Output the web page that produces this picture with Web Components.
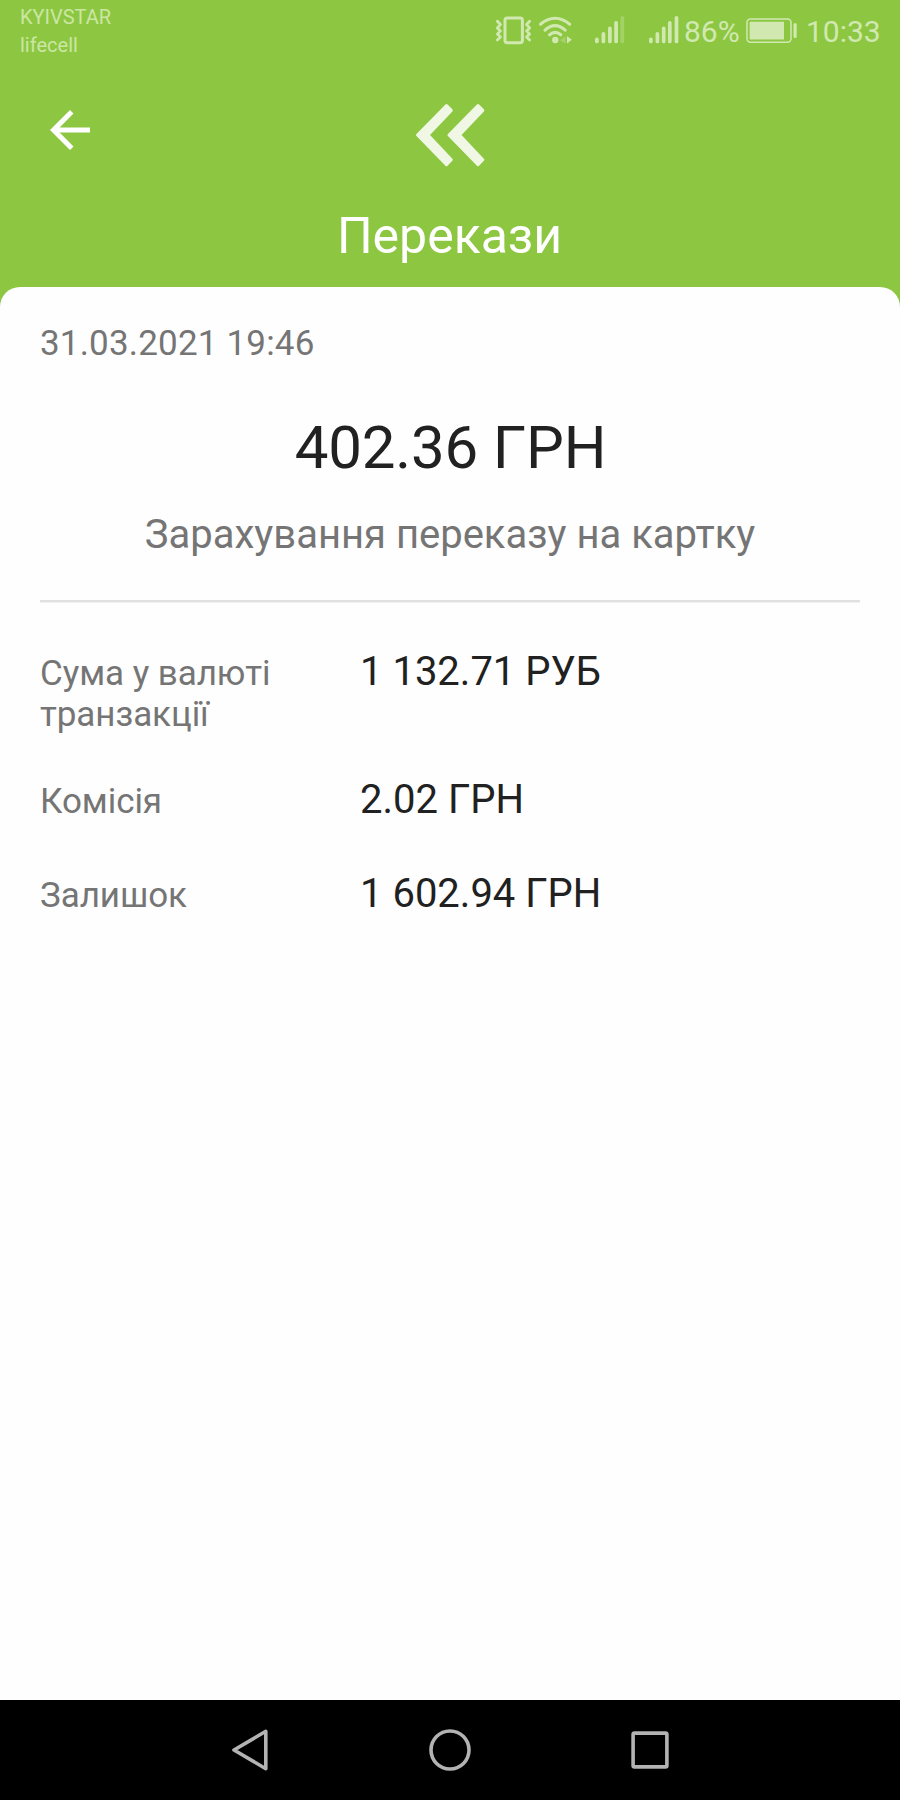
<!DOCTYPE html>
<html lang="uk">
<head>
<meta charset="utf-8">
<title>Перекази</title>
<style>
  body { margin: 0; background: #fefefe; font-family: Roboto, "Noto Sans", sans-serif; }
</style>
</head>
<body>
<transfer-screen></transfer-screen>
<script>
const define = (name, html) => {
  const template = document.createElement('template');
  template.innerHTML = html;
  customElements.define(name, class extends HTMLElement {
    constructor() {
      super();
      this.attachShadow({ mode: 'open' }).append(template.content.cloneNode(true));
    }
  });
};

define('status-icons', `
  <style>
    :host { display: flex; align-items: flex-start; height: 60px; color: #d1e9b1; }
    svg { display: block; height: 60px; flex: none; }
  </style>
  <svg width="44" viewBox="494 0 44 60" fill="none" stroke="currentColor" stroke-linejoin="round" stroke-linecap="round">
    <rect x="505" y="18" width="17.4" height="24.8" rx="2.2" stroke-width="3"/>
    <path stroke-width="2.8" d="M497.4 21.3l3 3.2-3 3.4 3 3-3 3.2 3 3-3 2.8M529.6 21.3l-3 3.2 3 3.4-3 3 3 3.2-3 3 3 2.8"/>
  </svg>
  <svg width="44" viewBox="538 0 44 60">
    <g fill="none" stroke="currentColor" stroke-width="3.1" stroke-linecap="round">
      <path d="M540.5 24.2Q555 12.3 569.7 24.2M545 30.2Q555 21 565.2 30.2M549.6 34.8Q555.2 30 560.8 34.8"/>
    </g>
    <circle cx="555.3" cy="40" r="3.2" fill="currentColor"/>
    <path d="M565.5 36.5v7l-5.5-3.2z" fill="currentColor" opacity=".35"/>
    <path d="M567 36v7.5l4.8-3.8z" fill="currentColor"/>
  </svg>
  <svg width="58" viewBox="592 0 58 60" style="margin-left:10px" stroke="currentColor" stroke-width="3.7" stroke-linecap="round">
    <path d="M596.9 39.3v2.2M603.4 33.8v7.7M609.9 28.3v13.2M616.1 22.8v18.7"/>
    <path d="M622.3 17.8v23.7" opacity=".32"/>
  </svg>
  <svg width="33" viewBox="647 0 33 60" style="margin-left:-3px" stroke="currentColor" stroke-width="3.7" stroke-linecap="round">
    <path d="M650.9 39.3v2.2M657.4 33.8v7.7M663.7 28.3v13.2M669.8 22.8v18.7M676.5 17.8v23.7"/>
  </svg>`);

define('battery-icon', `
  <style>:host { display: block; color: #d1e9b1; } svg { display: block; }</style>
  <svg width="54" height="60" viewBox="745 0 54 60" fill="none">
    <rect x="747" y="19" width="44" height="23.2" rx="3.4" stroke="currentColor" stroke-width="1.5"/>
    <rect x="749.6" y="21.8" width="34.4" height="17.6" rx=".6" fill="currentColor"/>
    <path d="M795.1 24.7v11.8" stroke="currentColor" stroke-width="3.2" stroke-linecap="round"/>
  </svg>`);

define('status-bar', `
  <style>
    :host { display: flex; height: 60px; padding: 0 20px; }
    .carriers { flex: 1; font-size: 20px; line-height: 28px; color: #cbe6a3; padding-top: 3px; }
    .text { font-size: 30px; line-height: 36px; padding-top: 14px; color: #d1e9b1; white-space: nowrap; }
    .percent { width: 61px; margin-left: 4px; }
    .time { width: 74px; margin-left: 7px; }
  </style>
  <div class="carriers"><div>KYIVSTAR</div><div>lifecell</div></div>
  <status-icons></status-icons>
  <div class="text percent">86%</div>
  <battery-icon></battery-icon>
  <div class="text time">10:33</div>`);

define('app-header', `
  <style>
    :host { display: block; height: 227px; color: #fff; }
    .tools { display: grid; grid-template-columns: 1fr auto 1fr; height: 146px; }
    svg { display: block; }
    .back { margin: 45px 0 0 45px; }
    .logo { margin-top: 40px; }
    h1 { margin: 0; padding-right: 1px; font-weight: 400; font-size: 50px; line-height: 60px; text-align: center; }
  </style>
  <div class="tools">
    <svg class="back" width="50" height="50" viewBox="45 105 50 50" fill="#fff">
      <path d="M90 127.5H59.6L73.5 113.5 70 110 50 130 70 150 73.5 146.5 59.6 132.5H90z"/>
    </svg>
    <svg class="logo" width="80" height="72" viewBox="410 100 80 72" fill="#f0f8e5" stroke="#f0f8e5" stroke-width="3" stroke-linejoin="round">
      <path d="M446.5 105.5L451.3 110.4 428 135 451.3 159.7 446.5 164.6 417.5 135z"/>
      <path d="M478 105.5L482.8 110.4 459.5 135 482.8 159.7 478 164.6 449 135z"/>
    </svg>
  </div>
  <h1><slot></slot></h1>`);

define('detail-row', `
  <style>
    :host { display: grid; grid-template-columns: 320px 1fr; align-items: baseline; }
    .label { font-size: 35px; line-height: 41px; letter-spacing: -.07px; color: #757575; width: 260px; }
    .value { font-size: 40px; line-height: 47px; color: #212121; }
  </style>
  <div class="label"><slot name="label"></slot></div>
  <div class="value"><slot></slot></div>`);

define('transfer-card', `
  <style>
    :host { display: flex; flex-direction: column; flex: 1; box-sizing: border-box; padding: 0 40px;
            background: #fefefe; border-radius: 20px 20px 0 0; }
    .date { padding-top: 36px; font-size: 35px; line-height: 41px; letter-spacing: .18px; color: #757575; }
    .amount { margin-top: 49px; padding-left: 1px; font-size: 60px; line-height: 70px; letter-spacing: -.18px; color: #212121; text-align: center; }
    .kind { margin-top: 28px; font-size: 40px; line-height: 47px; color: #757575; text-align: center; }
    .rule { margin-top: 42px; height: 2px; background: #e0e0e0; border-bottom: 1px solid #f0f0f0; }
    .rows { display: flex; flex-direction: column; gap: 47px; padding-top: 45px; }
  </style>
  <div class="date">31.03.2021 19:46</div>
  <div class="amount">402.36 ГРН</div>
  <div class="kind">Зарахування переказу на картку</div>
  <div class="rule"></div>
  <div class="rows">
    <detail-row><span slot="label">Сума у валюті транзакції</span>1 132.71 РУБ</detail-row>
    <detail-row style="margin-top:-6px"><span slot="label">Комісія</span>2.02 ГРН</detail-row>
    <detail-row><span slot="label">Залишок</span>1 602.94 ГРН</detail-row>
  </div>`);

define('nav-bar', `
  <style>
    :host { display: flex; justify-content: center; align-items: center; gap: 150px; height: 100px; background: #000; }
    svg { display: block; }
  </style>
  <svg width="50" height="50" viewBox="225 1725 50 50" fill="none" stroke="#b3b3b3" stroke-width="3.6" stroke-linejoin="round"><path d="M265.8 1731.3V1768.7L234 1750z"/></svg>
  <svg width="50" height="50" viewBox="0 0 50 50" fill="none" stroke="#b3b3b3" stroke-width="3.6"><circle cx="25" cy="25" r="19"/></svg>
  <svg width="50" height="50" viewBox="0 0 50 50" fill="none" stroke="#b3b3b3" stroke-width="3.6"><rect x="8.1" y="8.1" width="33.8" height="33.8" rx="1.4"/></svg>`);

define('transfer-screen', `
  <style>:host { display: flex; flex-direction: column; width: 900px; height: 1800px; background: linear-gradient(#8dc742 0 400px, #fefefe 400px); }</style>
  <status-bar></status-bar>
  <app-header>Перекази</app-header>
  <transfer-card></transfer-card>
  <nav-bar></nav-bar>`);
</script>
</body>
</html>
